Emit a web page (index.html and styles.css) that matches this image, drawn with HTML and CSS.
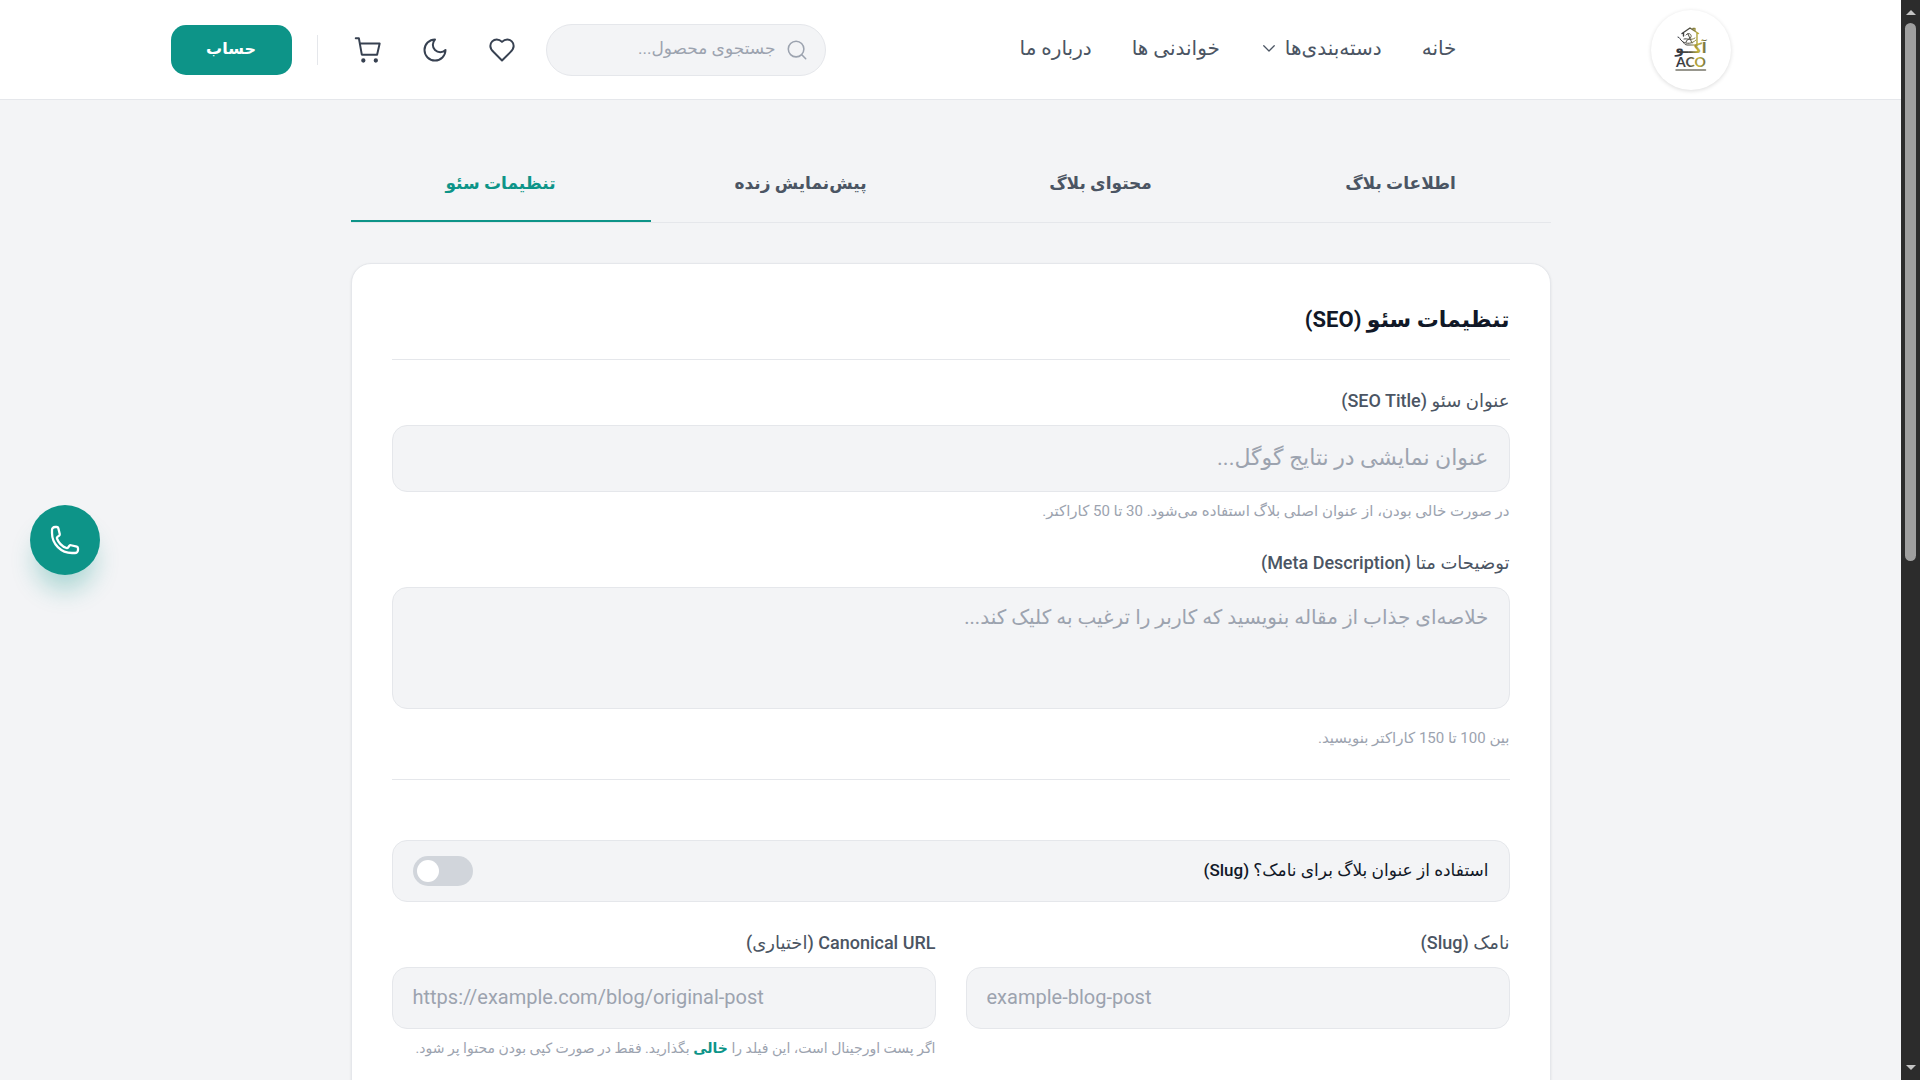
FILE: index.html
```html
<!DOCTYPE html>
<html lang="fa" dir="rtl">
<head>
  <meta charset="UTF-8">
  <meta name="viewport" content="width=device-width, initial-scale=1">
  <title>تنظیمات سئو</title>
  <link rel="stylesheet" href="styles.css">
</head>
<body>

  <div class="scrollbar" aria-hidden="true">
    <span class="arrow arrow-up"></span>
    <span class="track"><span class="thumb"></span></span>
    <span class="arrow arrow-down"></span>
  </div>

  <div class="page">
    <header class="header">
      <div class="header-inner">
        <a class="logo" href="#" aria-label="ACO">
          <svg width="34" height="46" viewBox="0 0 34 46">
            <defs>
              <linearGradient id="gold" gradientUnits="userSpaceOnUse" x1="2" y1="0" x2="32" y2="0">
                <stop offset="0" stop-color="#2f3340"/>
                <stop offset="0.45" stop-color="#4f4e42"/>
                <stop offset="0.75" stop-color="#c4b63c"/>
                <stop offset="1" stop-color="#6c6944"/>
              </linearGradient>
            </defs>
            <g fill="none" stroke="url(#gold)" stroke-linecap="round" stroke-linejoin="round">
              <path d="M8 6.500 16 1l8.500 5.500M9.500 6v3M23 6v12M19 2.500V1.500h2v2.500" stroke-width="1.400"/>
              <path d="M4 10c2 0 2 3 4 4s2 4 5 4h9M12 8c2-3 6-1 5 2s-5 2-5 5M10 12c3-1 7 2 11-1M14 7l4 9M9 15c4 2 9 2 13-2" stroke-width="1"/>
            </g>
            <text class="logo-fa" x="17" y="26" text-anchor="middle" fill="url(#gold)">آکــو</text>
            <text class="logo-en" x="17" y="40" text-anchor="middle" fill="url(#gold)">ACO</text>
            <path d="M2 43h30" stroke="#77756a" stroke-width="1.500" stroke-dasharray="2 .5"/>
          </svg>
        </a>

        <nav class="nav">
          <a href="#">خانه</a>
          <a href="#" class="nav-more">دسته‌بندی‌ها
            <svg width="18" height="18" viewBox="0 0 24 24"><path d="m5 9 7 7 7-7"/></svg>
          </a>
          <a href="#">خواندنی ها</a>
          <a href="#">درباره ما</a>
        </nav>

        <div class="actions">
          <label class="search">
            <svg width="22" height="22" viewBox="0 0 24 24"><circle cx="11" cy="11" r="8.500"/><path d="m17.500 17.500 4 4"/></svg>
            <input type="search" placeholder="جستجوی محصول..." aria-label="جستجوی محصول">
          </label>
          <button type="button" class="icon-button" aria-label="علاقه‌مندی‌ها">
            <svg width="28" height="28" viewBox="0 0 24 24"><path d="M19 14c1.490-1.460 3-3.210 3-5.500A5.500 5.500 0 0 0 16.500 3c-1.760 0-3 .5-4.500 2-1.500-1.500-2.740-2-4.500-2A5.500 5.500 0 0 0 2 8.500c0 2.300 1.500 4.050 3 5.500l7 7z"/></svg>
          </button>
          <button type="button" class="icon-button" aria-label="حالت شب">
            <svg width="28" height="28" viewBox="0 0 24 24"><path d="M12 3a6 6 0 0 0 9 9 9 9 0 1 1-9-9z"/></svg>
          </button>
          <button type="button" class="icon-button" aria-label="سبد خرید">
            <svg width="28" height="28" viewBox="0 0 24 24"><path d="M1.500 2h2.700l2.500 14h13.100L22 6.500H5.100"/><circle cx="8" cy="21" r="1" fill="currentColor"/><circle cx="18.700" cy="21" r="1" fill="currentColor"/></svg>
          </button>
          <span class="separator"></span>
          <button type="button" class="account">حساب</button>
        </div>
      </div>
    </header>

    <main class="main">
      <div class="tabs" role="tablist">
        <button type="button" class="tab" role="tab">اطلاعات بلاگ</button>
        <button type="button" class="tab" role="tab">محتوای بلاگ</button>
        <button type="button" class="tab" role="tab">پیش‌نمایش زنده</button>
        <button type="button" class="tab active" role="tab" aria-selected="true">تنظیمات سئو</button>
      </div>

      <form class="card">
        <h1 class="card-title">تنظیمات سئو (SEO)</h1>

        <div class="field">
          <label for="seoTitle">عنوان سئو (SEO Title)</label>
          <input type="text" id="seoTitle" class="input input-large" placeholder="عنوان نمایشی در نتایج گوگل...">
          <p class="hint">در صورت خالی بودن، از عنوان اصلی بلاگ استفاده می‌شود. 30 تا 50 کاراکتر.</p>
        </div>

        <div class="field field-meta">
          <label for="metaDescription">توضیحات متا (Meta Description)</label>
          <textarea id="metaDescription" class="input" placeholder="خلاصه‌ای جذاب از مقاله بنویسید که کاربر را ترغیب به کلیک کند..."></textarea>
          <p class="hint">بین 100 تا 150 کاراکتر بنویسید.</p>
        </div>

        <div class="slug-section">
          <div class="toggle-row">
            <label for="useTitle">استفاده از عنوان بلاگ برای نامک؟ (Slug)</label>
            <input type="checkbox" id="useTitle" class="switch" role="switch">
          </div>

          <div class="columns">
            <div class="field">
              <label for="slug">نامک (Slug)</label>
              <input type="text" id="slug" class="input" dir="ltr" placeholder="example-blog-post">
            </div>
            <div class="field">
              <label for="canonical">Canonical URL (اختیاری)</label>
              <input type="url" id="canonical" class="input" dir="ltr" placeholder="https://example.com/blog/original-post">
              <p class="hint">اگر پست اورجینال است، این فیلد را <strong>خالی</strong> بگذارید. فقط در صورت کپی بودن محتوا پر شود.</p>
            </div>
          </div>
        </div>
      </form>
    </main>
  </div>

  <a class="call-button" href="#" aria-label="تماس">
    <svg width="32" height="32" viewBox="0 0 24 24"><path d="M2.250 6.750c0 8.284 6.716 15 15 15h2.250a2.250 2.250 0 0 0 2.250-2.250v-1.372c0-.516-.351-.966-.852-1.091l-4.423-1.106c-.44-.11-.902.055-1.173.417l-.970 1.293c-.282.376-.769.542-1.210.380a12.035 12.035 0 0 1-7.143-7.143c-.162-.441.004-.928.380-1.210l1.293-.970c.363-.271.527-.734.417-1.173L6.963 3.102a1.125 1.125 0 0 0-1.091-.852H4.500A2.250 2.250 0 0 0 2.250 4.500v2.250z"/></svg>
  </a>

</body>
</html>
```
FILE: styles.css
```css
* { box-sizing: border-box; }
body {
  margin: 0;
  height: 100vh;
  display: flex;
  overflow: hidden;
  font-family: Roboto, "DejaVu Sans", sans-serif;
  background: #f3f4f6;
  color: #111827;
}
button, input, textarea { font-family: inherit; }
a { color: inherit; text-decoration: none; }
svg { display: block; flex: none; fill: none; stroke: currentColor; stroke-width: 1.7; stroke-linecap: round; stroke-linejoin: round; }

/* Scrollbar */
.scrollbar { flex: none; width: 19px; display: flex; flex-direction: column; align-items: center; gap: 8px; padding: 10px 0; background: #2c2c2c; }
.track { flex: 1; width: 11px; }
.thumb { display: block; height: 52%; border-radius: 6px; background: #9f9f9f; }
.arrow { border: 5px solid transparent; }
.arrow-up { border-top: 0; border-bottom-color: #c4c4c4; }
.arrow-down { border-bottom: 0; border-top-color: #c4c4c4; }

.page { flex: 1; min-width: 0; overflow-y: auto; scrollbar-width: none; }

/* Header */
.header { background: #fff; border-bottom: 1px solid #e5e7eb; }
.header-inner { max-width: 1560px; height: 99px; margin: 0 auto; display: flex; align-items: center; justify-content: space-between; }
.logo { width: 80px; height: 80px; border-radius: 50%; display: flex; align-items: center; justify-content: center; box-shadow: 0 1px 4px rgba(0, 0, 0, 0.14); }
.logo svg text { stroke: none; font-weight: bold; }
.logo-fa { font-family: "DejaVu Sans", sans-serif; font-size: 14px; }
.logo-en { font-family: Lato, sans-serif; font-size: 14px; }
.nav { display: flex; align-items: center; gap: 40px; padding-bottom: 3px; font-size: 20px; color: #4b5563; }
.nav-more { display: flex; align-items: center; gap: 7px; }
.actions { display: flex; align-items: center; gap: 24px; color: #374151; }
.search { width: 280px; height: 52px; margin-left: -2px; padding: 0 17px; display: flex; align-items: center; gap: 10px; border: 1px solid #e5e7eb; border-radius: 26px; background: #f3f4f6; color: #9ca3af; }
.search input { flex: 1; min-width: 0; border: 0; padding: 0 0 3px; outline: 0; background: none; font-size: 17px; }
.icon-button { width: 43px; height: 43px; padding: 0; display: flex; align-items: center; justify-content: center; border: 0; background: none; color: inherit; cursor: pointer; }
.separator { width: 1px; height: 30px; margin: 0 5px 0 1px; background: #e5e7eb; }
.account { width: 121px; height: 50px; padding: 0 0 3px; border: 0; border-radius: 15px; background: #0d9488; color: #fff; font-size: 16px; font-weight: bold; cursor: pointer; }

/* Tabs */
.main { max-width: 1200px; margin: 0 auto; padding: 40px 0; }
.tabs { display: flex; margin-bottom: 40px; border-bottom: 1px solid #e5e7eb; }
.tab { flex: 1; height: 82px; padding: 6px 0 0; border: 0; border-bottom: 2px solid transparent; background: none; color: #4b5563; font-size: 17px; font-weight: bold; cursor: pointer; }
.tab.active { border-color: #0d9488; color: #0d9488; }

/* Form */
.card { padding: 40px; border: 1px solid #e5e7eb; border-radius: 20px; background: #fff; box-shadow: 0 1px 3px rgba(0, 0, 0, 0.08); }
.card-title { margin: 0 0 25px; padding-bottom: 23px; border-bottom: 1px solid #e5e7eb; font-size: 22px; line-height: 32px; }
.field { display: flex; flex-direction: column; min-width: 0; margin-bottom: 23px; }
.field label { margin-bottom: 8px; font-size: 18px; font-weight: 500; line-height: 32px; color: #4b5563; }
.input { width: 100%; height: 62px; padding: 0 20px 3px; border: 1px solid #e5e7eb; border-radius: 15px; background: #f3f4f6; font-size: 20px; }
.input-large { height: 67px; font-size: 22px; }
textarea.input { height: 122px; padding: 14px 20px; line-height: 30px; resize: none; }
.input::placeholder, .search input::placeholder { color: #9ca3af; opacity: 1; }
.hint { margin: 7px 0 0; font-size: 15px; line-height: 25px; color: #9ca3af; }
.hint strong { color: #0d9488; }
.field-meta .hint { margin-top: 17px; }
.columns .hint { font-size: 14px; }
.slug-section { margin-top: 28px; padding-top: 60px; border-top: 1px solid #e5e7eb; }
.toggle-row { height: 62px; padding: 0 20px; display: flex; align-items: center; justify-content: space-between; border: 1px solid #e5e7eb; border-radius: 15px; background: #f3f4f6; font-size: 17px; font-weight: 500; }
.toggle-row label { padding-bottom: 3px; }
.switch { appearance: none; width: 60px; height: 30px; margin: 0; padding: 4px; display: flex; justify-content: flex-end; border-radius: 15px; background: #d1d5db; cursor: pointer; }
.switch::before { content: ""; width: 22px; height: 22px; border-radius: 50%; background: #fff; }
.switch:checked { justify-content: flex-start; background: #0d9488; }
.columns { display: grid; grid-template-columns: 1fr 1fr; gap: 30px; margin-top: 25px; }

.call-button { position: fixed; left: 30px; top: 50%; width: 70px; height: 70px; margin-top: -35px; display: flex; align-items: center; justify-content: center; border-radius: 50%; background: #0d9488; color: #fff; box-shadow: 0 20px 25px -5px rgba(13, 148, 136, 0.3); }
```
